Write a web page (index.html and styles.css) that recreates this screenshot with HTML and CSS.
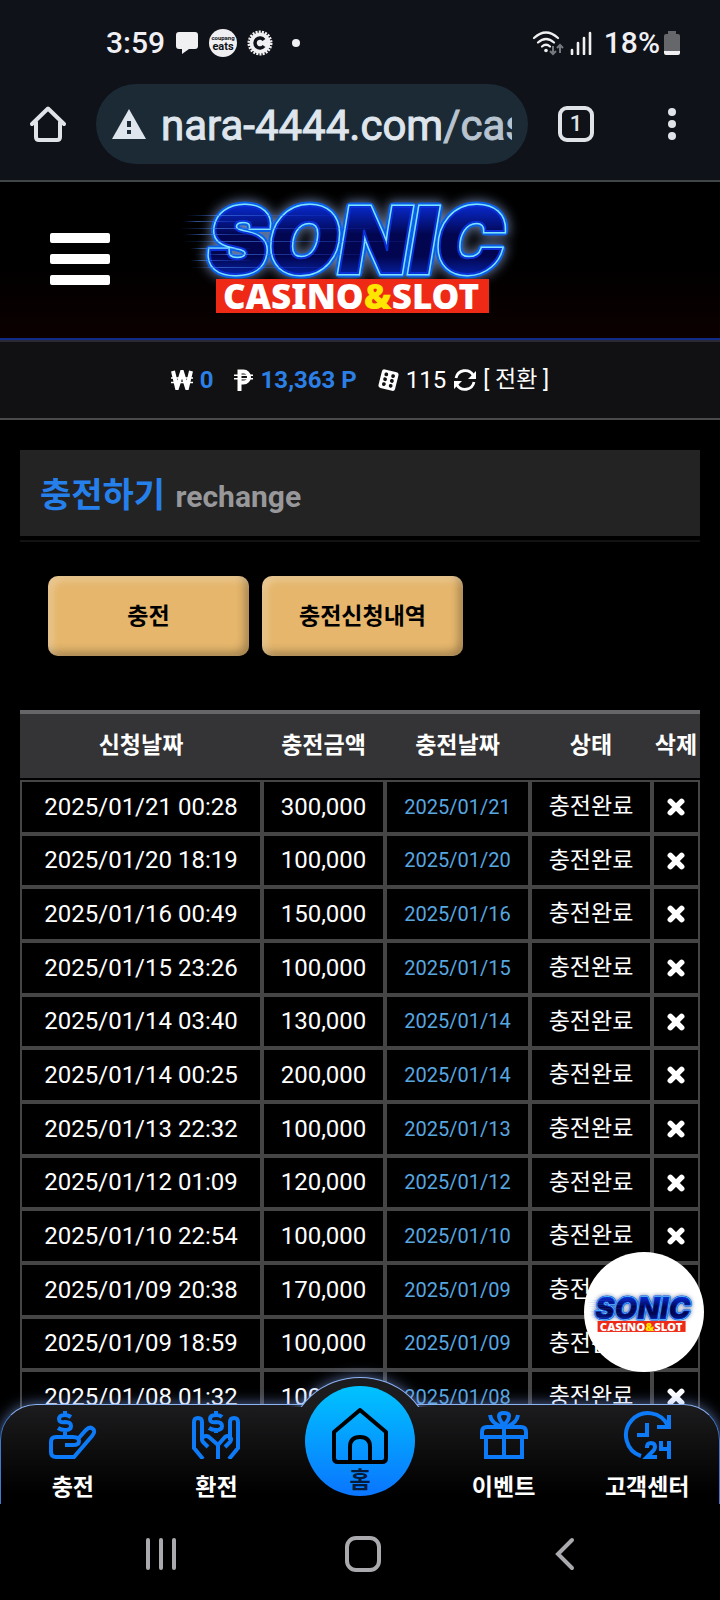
FILE: index.html
```html
<!DOCTYPE html>
<html lang="ko">
<head>
<meta charset="utf-8">
<meta name="viewport" content="width=device-width, initial-scale=1">
<title>충전하기</title>
<link rel="stylesheet" href="styles.css">
</head>
<body>
<svg class="defs" aria-hidden="true">
  <defs>
    <linearGradient id="letter" x1="0" y1="0" x2="0" y2="1">
      <stop offset="0.1" stop-color="#0a35f5"/><stop offset=".45" stop-color="#020650"/><stop offset=".65" stop-color="#020650"/><stop offset="1" stop-color="#0a3cf5"/>
    </linearGradient>
    <linearGradient id="streak" x1="0" y1="0" x2="1" y2="0">
      <stop offset="0" stop-color="#2c6cff" stop-opacity="0"/><stop offset=".2" stop-color="#4d86e8" stop-opacity=".6"/><stop offset="1" stop-color="#2050ff" stop-opacity=".1"/>
    </linearGradient>
    <filter id="glow" x="-20%" y="-40%" width="140%" height="180%"><feGaussianBlur stdDeviation="6"/></filter>
    <symbol id="logo" viewBox="0 0 360 124">
      <g class="logo-word">
        <text class="logo-halo" x="28" y="84" filter="url(#glow)">SONIC</text>
        <text class="logo-rim" x="28" y="84">SONIC</text>
        <text class="logo-edge" x="28" y="84">SONIC</text>
        <text class="logo-face" x="28" y="84">SONIC</text>
      </g>
      <g fill="url(#streak)">
        <rect x="6" y="26" width="150" height="1"/><rect x="3" y="32" width="70" height="1"/><rect x="0" y="39" width="190" height="1"/><rect x="4" y="45" width="90" height="1"/><rect x="2" y="52" width="230" height="1"/><rect x="10" y="59" width="60" height="1"/><rect x="14" y="65" width="180" height="1"/><rect x="10" y="71" width="60" height="1"/><rect x="12" y="78" width="140" height="1"/>
      </g>
      <rect x="36" y="90" width="273" height="34" fill="#ee2a17"/>
      <text class="logo-sub" x="171" y="120">CASINO<tspan fill="#ffe600">&amp;</tspan>SLOT</text>
    </symbol>
    <symbol id="cross" viewBox="0 0 16 16"><path d="M3 3l10 10M13 3L3 13" fill="none" stroke="#fff" stroke-width="5" stroke-linecap="round"/></symbol>
  </defs>
</svg>

<div class="status">
  <div class="status-left">
    <span class="status-text">3:59</span>
    <svg width="24" height="26" viewBox="0 0 24 26"><path fill="#f0f0f2" d="M4 2h16q3 0 3 3v11q0 3-3 3h-6l-7 5v-5H4q-3 0-3-3V5q0-3 3-3z"/></svg>
    <svg width="28" height="28" viewBox="0 0 28 28"><circle cx="14" cy="14" r="14" fill="#f0f0f2"/><text class="badge-small" x="14" y="11">coupang</text><text class="badge-eats" x="14" y="21">eats</text></svg>
    <svg width="26" height="26" viewBox="0 0 26 26"><circle cx="13" cy="13" r="10.500" fill="#f0f0f2"/><circle cx="13" cy="13" r="11" fill="none" stroke="#f0f0f2" stroke-width="3" stroke-dasharray="2 1.140"/><path d="M17 10a5 5 0 1 0 0 6" fill="none" stroke="#0f1218" stroke-width="3.500"/></svg>
    <span class="dot"></span>
  </div>
  <div class="status-right">
    <svg width="32" height="26" viewBox="0 0 32 26"><g fill="none" stroke="#f0f0f2" stroke-width="2.200" stroke-linecap="round"><path d="M2 8q12-11 24 0M6 12.500q8-7 16 0M10 16.500q4-3.500 8 0"/></g><circle cx="14" cy="20.500" r="1.800" fill="#f0f0f2"/><path d="M21 16v8m-3-3l3 3 3-3M28 23v-8m-3 3l3-3 3 3" fill="none" stroke="#75787d" stroke-width="2"/></svg>
    <svg width="22" height="24" viewBox="0 0 22 24"><path d="M2 23v-4M8 23V12M14 23V7M20 23V2" stroke="#f0f0f2" stroke-width="2.600" stroke-linecap="round"/></svg>
    <span class="status-text battery-text">18%</span>
    <svg width="16" height="24" viewBox="0 0 16 24"><path fill="#65676b" d="M4 0h8v3h2q2 0 2 2v15H0V5q0-2 2-2h2z"/><path fill="#f0f0f2" d="M0 20h16v2q0 2-2 2H2q-2 0-2-2z"/></svg>
  </div>
</div>

<div class="browser">
  <button class="icon-btn" aria-label="홈페이지"><svg width="36" height="36" viewBox="0 0 36 36"><path d="M2 18L18 2.500 34 18M6 16v15q0 3 3 3h18q3 0 3-3V16" fill="none" stroke="#e0e3e8" stroke-width="4" stroke-linecap="round" stroke-linejoin="round"/></svg></button>
  <div class="address">
    <svg width="34" height="30" viewBox="0 0 34 30"><path d="M17 0l17 30H0z" fill="#dfe5ec"/><path d="M17 12v6M17 21v4" stroke="#1c2a36" stroke-width="4"/></svg>
    <span class="url">nara-4444.com<span class="url-path">/cas</span></span>
  </div>
  <button class="tabs" aria-label="탭">1</button>
  <button class="icon-btn menu" aria-label="메뉴"><svg width="8" height="34" viewBox="0 0 8 34" fill="#e0e3e8"><circle cx="4" cy="5" r="4"/><circle cx="4" cy="17" r="4"/><circle cx="4" cy="29" r="4"/></svg></button>
</div>

<div class="page">
  <header class="header">
    <button class="hamburger" aria-label="전체 메뉴"><span></span><span></span><span></span></button>
    <a class="brand" href="#" aria-label="SONIC CASINO&amp;SLOT"><svg viewBox="0 0 360 124"><use href="#logo"/></svg></a>
  </header>
  <div class="balance">
    <span class="pair"><svg width="22" height="20" viewBox="0 0 22 20"><path d="M2 1l4 17L11 2l5 16L20 1" fill="none" stroke="#fff" stroke-width="4"/><path d="M0 8h22M0 12.500h22" stroke="#fff" stroke-width="1.500"/></svg><b>0</b></span>
    <span class="pair"><svg width="20" height="22" viewBox="0 0 20 22"><path d="M5.500 22V2.500h4a5 5 0 0 1 0 11h-4" fill="none" stroke="#fff" stroke-width="4"/><path d="M0 6.200h19M0 9.800h19" stroke="#fff" stroke-width="1.600"/></svg><b>13,363 P</b></span>
    <span class="pair"><svg width="22" height="22" viewBox="0 0 22 22"><g transform="rotate(14 11 11)"><rect x="3" y="1.500" width="17" height="19" rx="2.500" fill="#fff"/><g fill="#111"><circle cx="8" cy="6" r="1.900"/><circle cx="8" cy="11" r="1.900"/><circle cx="8" cy="16" r="1.900"/><circle cx="15" cy="6" r="1.900"/><circle cx="15" cy="11" r="1.900"/><circle cx="15" cy="16" r="1.900"/></g></g></svg><span>115</span></span>
    <a class="convert" href="#"><svg width="22" height="22" viewBox="0 0 22 22"><path d="M2 9a9.300 9.300 0 0 1 17-3M20 13a9.300 9.300 0 0 1-17 3" fill="none" stroke="#fff" stroke-width="2.800"/><path d="M22 2v8h-8zM0 20v-8h8z" fill="#fff"/></svg><span>[ 전환 ]</span></a>
  </div>

  <main class="content">
    <h1 class="title">충전하기 <small>rechange</small></h1>
    <div class="actions"><button>충전</button><button>충전신청내역</button></div>
    <table class="history">
      <colgroup><col class="c-request"><col class="c-amount"><col class="c-date"><col class="c-state"><col class="c-delete"></colgroup>
      <thead><tr><th>신청날짜</th><th>충전금액</th><th>충전날짜</th><th>상태</th><th>삭제</th></tr></thead>
      <tbody id="rows"></tbody>
    </table>
  </main>

  <a class="floating" href="#" aria-label="SONIC CASINO&amp;SLOT"><svg viewBox="0 0 360 124"><use href="#logo"/></svg></a>

  <nav class="dock">
    <div class="hump"></div>
    <a href="#"><svg width="48" height="48" viewBox="0 0 48 48"><path d="M22 6q-3-2-6-2-6 0-6 4t6 3q6 0 6 4t-6 4q-4 0-7-2M16 0v4M16 18v6M16 34h8q6 0 6-4t-6-4H7q-5 0-5 5v10q0 5 5 5h18l18-21q4-5 1-7-3-3-7 1l-9 10"/></svg><span>충전</span></a>
    <a href="#"><svg width="48" height="48" viewBox="0 0 48 48"><path d="M30 6q-2-2-6-2-6 0-6 4t6 3q6 0 6 4t-6 4q-4 0-7-2M24 0v4M24 18v4M11 48L2 37V11q0-4 4-4t4 4v18M37 48l9-11V11q0-4-4-4t-4 4v18M26 48V34l-9-8q-3-2-6 0-2 2 0 5l5 5M26 34l7-8q3-2 5 0 2 2 0 5l-5 5"/></svg><span>환전</span></a>
    <a class="home" href="#"><svg width="56" height="56" viewBox="0 0 56 56"><path d="M6 54h44q4 0 4-4V24L28 2 2 24v26q0 4 4 4zM18 54V39q0-10 10-10t10 10v15"/></svg><span>홈</span></a>
    <a href="#"><svg width="48" height="48" viewBox="0 0 48 48"><path d="M2 26v-5q0-5 5-5h34q5 0 5 5v5zM6 26v20h36V26M24 16v30M24 14q-5-5-5-9 0-3 5-3t5 3q0 4-5 9M22 16Q11 12 10 4M26 16q11-4 12-12"/></svg><span>이벤트</span></a>
    <a href="#"><svg width="48" height="48" viewBox="0 0 48 48"><path d="M18 45A22 22 0 1 1 45 15M46 4v12H34M24 12v12H14M24 37v-1q0-4 4-4t4 4q0 2-2 4l-6 6h10M38 30v8h8M46 30v18"/></svg><span>고객센터</span></a>
  </nav>
</div>

<div class="system">
  <button aria-label="최근 앱"><svg width="32" height="34" viewBox="0 0 32 34"><path d="M3 3v28M16 3v28M29 3v28"/></svg></button>
  <button aria-label="홈"><svg width="36" height="36" viewBox="0 0 36 36"><rect x="2" y="2" width="32" height="32" rx="9"/></svg></button>
  <button aria-label="뒤로"><svg width="20" height="34" viewBox="0 0 20 34"><path d="M17 3L3 17l14 14"/></svg></button>
</div>
<script src="history.js"></script>
</body>
</html>
```
FILE: history.js
```js
const deposits = [
  ["2025/01/21", "00:28", "300,000"],
  ["2025/01/20", "18:19", "100,000"],
  ["2025/01/16", "00:49", "150,000"],
  ["2025/01/15", "23:26", "100,000"],
  ["2025/01/14", "03:40", "130,000"],
  ["2025/01/14", "00:25", "200,000"],
  ["2025/01/13", "22:32", "100,000"],
  ["2025/01/12", "01:09", "120,000"],
  ["2025/01/10", "22:54", "100,000"],
  ["2025/01/09", "20:38", "170,000"],
  ["2025/01/09", "18:59", "100,000"],
  ["2025/01/08", "01:32", "100,000"]
];

document.getElementById("rows").innerHTML = deposits.map(([day, time, amount]) => `
  <tr>
    <td>${day} ${time}</td>
    <td>${amount}</td>
    <td class="paid">${day}</td>
    <td class="state">충전완료</td>
    <td><button class="remove" aria-label="삭제"><svg width="18" height="18" viewBox="0 0 16 16"><use href="#cross"/></svg></button></td>
  </tr>`).join("");
```
FILE: styles.css
```css
* { box-sizing: border-box; }

body {
  margin: 0;
  height: 100vh;
  display: flex;
  flex-direction: column;
  background: #000;
  color: #fff;
  font-family: Roboto, "Noto Sans CJK KR", sans-serif;
  font-size: 24px;
}

button { margin: 0; padding: 0; border: 0; background: none; color: inherit; font: inherit; }
a { color: inherit; text-decoration: none; }
svg { display: block; flex: none; }
.defs { position: absolute; width: 0; height: 0; }

.status {
  display: flex;
  justify-content: space-between;
  align-items: center;
  padding: 23px 40px 21px 106px;
  background: #0f1218;
  color: #f0f0f4;
}
.status-left, .status-right { display: flex; align-items: center; }
.status-left { gap: 10px; }
.status-right { gap: 6px; }
.status-text { font-size: 30px; line-height: 40px; font-weight: 500; }
.battery-text { margin: 0 -2px 0 6px; }
.dot { width: 8px; height: 8px; margin-left: 9px; border-radius: 50%; background: #f0f0f2; }
.badge-small { font: 700 6px Roboto, sans-serif; fill: #0f1218; text-anchor: middle; }
.badge-eats { font: 700 11px Roboto, sans-serif; fill: #0f1218; text-anchor: middle; }

.browser {
  display: flex;
  align-items: center;
  padding: 0 44px 16px 30px;
  background: #0f1218;
  border-bottom: 2px solid #404646;
}
.address {
  flex: 1;
  min-width: 0;
  display: flex;
  align-items: center;
  gap: 15px;
  margin: 0 30px;
  padding: 0 16px;
  height: 80px;
  border-radius: 40px;
  background: #1c2a35;
}
.url { flex: 1; overflow: hidden; white-space: nowrap; padding-top: 3px; font-size: 42px; line-height: 56px; color: #dfe5ec; -webkit-text-stroke: 1px; }
.url-path { color: #b7c3cf; }
.tabs { width: 36px; height: 36px; border: 4px solid #e0e3e8; border-radius: 9px; font-size: 22px; line-height: 28px; font-weight: 500; color: #e0e3e8; }
.menu { margin-left: 74px; }

.page { position: relative; flex: 1; min-height: 0; overflow: hidden; background: #000; }

.header {
  display: grid;
  grid-template-columns: 1fr 360px 1fr;
  align-items: center;
  height: 160px;
  padding-bottom: 4px;
  border-bottom: 2px solid #2a2a36;
  box-shadow: inset 0 -2px #102c88;
  background: linear-gradient(#000, #000 50%, #0c0000);
}
.hamburger { display: grid; gap: 11px; width: 60px; margin-left: 50px; }
.hamburger span { height: 10px; border-radius: 2px; background: #fff; }
.brand { padding-bottom: 16px; }
.logo-word { font: italic 900 91px Inter, sans-serif; }
.logo-halo { fill: #6b7fa8; stroke: #6b7fa8; stroke-width: 10px; }
.logo-rim { fill: #0a5fe8; stroke: #0a5fe8; stroke-width: 9px; stroke-linejoin: round; }
.logo-edge { fill: none; stroke: #7de4ff; stroke-width: 5px; }
.logo-face { fill: url(#letter); stroke: #0a30d8; stroke-width: 2px; }
.logo-sub { font: 900 35px "Noto Sans", sans-serif; fill: #fff; text-anchor: middle; }

.balance {
  display: flex;
  justify-content: center;
  align-items: center;
  padding: 19px 0;
  line-height: 38px;
  background: #111113;
  border-bottom: 2px solid #4a4a4d;
}
.balance b { color: #2c7fe5; }
.pair, .convert { display: flex; align-items: center; gap: 7px; }
.pair { margin-right: 20px; }
.pair:nth-of-type(3) { margin-right: 8px; }
.convert { font-size: 23px; }

.content { padding: 30px 20px 0; }
.title { position: relative; margin: 0; padding: 19px 20px 15px; line-height: 52px; font-size: 34px; font-weight: 700; color: #2680eb; background: #232324; }
.title::after { content: ""; position: absolute; left: 0; right: 0; bottom: -6px; height: 2px; background: #121213; }
.title small { margin-left: 2px; line-height: 1; font-size: 30px; color: #98989b; }
.actions { display: flex; gap: 13px; padding: 40px 28px 54px; }
.actions button {
  width: 201px;
  height: 80px;
  padding-bottom: 5px;
  border-radius: 10px;
  background: #e5b66c;
  color: #000;
  font-size: 23px;
  font-weight: 700;
  box-shadow: inset 4px 4px 8px rgba(255, 255, 255, .3), inset -4px -4px 8px rgba(0, 0, 0, .3);
}

.history { width: 100%; table-layout: fixed; border-collapse: separate; border-spacing: 0; text-align: center; }
.c-request { width: 242px; }
.c-amount { width: 123px; }
.c-date { width: 145px; }
.c-state { width: 122px; }
.c-delete { width: 48px; }
.history th { padding: 14px 0; line-height: 36px; font-size: 23px; white-space: nowrap; background: #343335; border-top: 4px solid #666567; border-bottom: 2px solid #000; }
.history td { padding: 7px 0; line-height: 36px; white-space: nowrap; border: 2px solid #454546; }
.history tr:nth-child(3n+2) td { line-height: 35px; }
.history .paid { font-size: 20px; color: #57a7e0; }
.history .state { font-size: 23px; }
.remove { display: block; margin: 0 auto; }

.floating {
  position: absolute;
  right: 16px;
  bottom: 132px;
  width: 120px;
  height: 120px;
  display: flex;
  align-items: center;
  justify-content: center;
  border-radius: 50%;
  background: #fff;
}
.floating svg { width: 116px; }

.dock {
  position: absolute;
  left: 0;
  right: 0;
  bottom: 0;
  display: grid;
  grid-template-columns: repeat(5, 1fr);
  padding: 6px 0 0;
  border: 1px solid #4179cf;
  border-top-color: #8bb4f5;
  border-bottom: 0;
  border-radius: 36px 36px 0 0;
  background: linear-gradient(#1c1c1e, #000 90%);
  box-shadow: 0 0 14px rgba(130, 165, 240, .65);
}
.dock a { position: relative; display: flex; flex-direction: column; align-items: center; font-size: 23px; font-weight: 700; }
.dock a svg { fill: none; stroke: #0d7bf7; stroke-width: 4px; }
.dock a span { padding: 12px 0 0; line-height: 33px; white-space: nowrap; }
.hump {
  position: absolute;
  left: calc(50% - 70px);
  top: -28px;
  width: 140px;
  height: 128px;
  border: 1px solid #8bb4f5;
  border-radius: 50%;
  background: #1c1c1e;
  box-shadow: 0 0 14px rgba(130, 165, 240, .65);
  clip-path: inset(-20px -20px 98px -20px);
}
.dock .home {
  position: absolute;
  left: calc(50% - 55px);
  top: -19px;
  width: 110px;
  height: 110px;
  padding-top: 22px;
  border-radius: 50%;
  background: linear-gradient(#00c3ff, #0a75ff);
  color: #061a3a;
}
.dock .home svg { stroke: #000; stroke-linejoin: round; }
.dock .home span { padding: 0; }
.dock .home + a { grid-column: 4; }

.system { display: grid; grid-template-columns: repeat(3, 1fr); justify-items: center; align-items: center; height: 96px; padding: 4px 54px 0 60px; background: #000; }
.system svg { fill: none; stroke: #aaa9ad; stroke-width: 4px; stroke-linecap: round; }
```
